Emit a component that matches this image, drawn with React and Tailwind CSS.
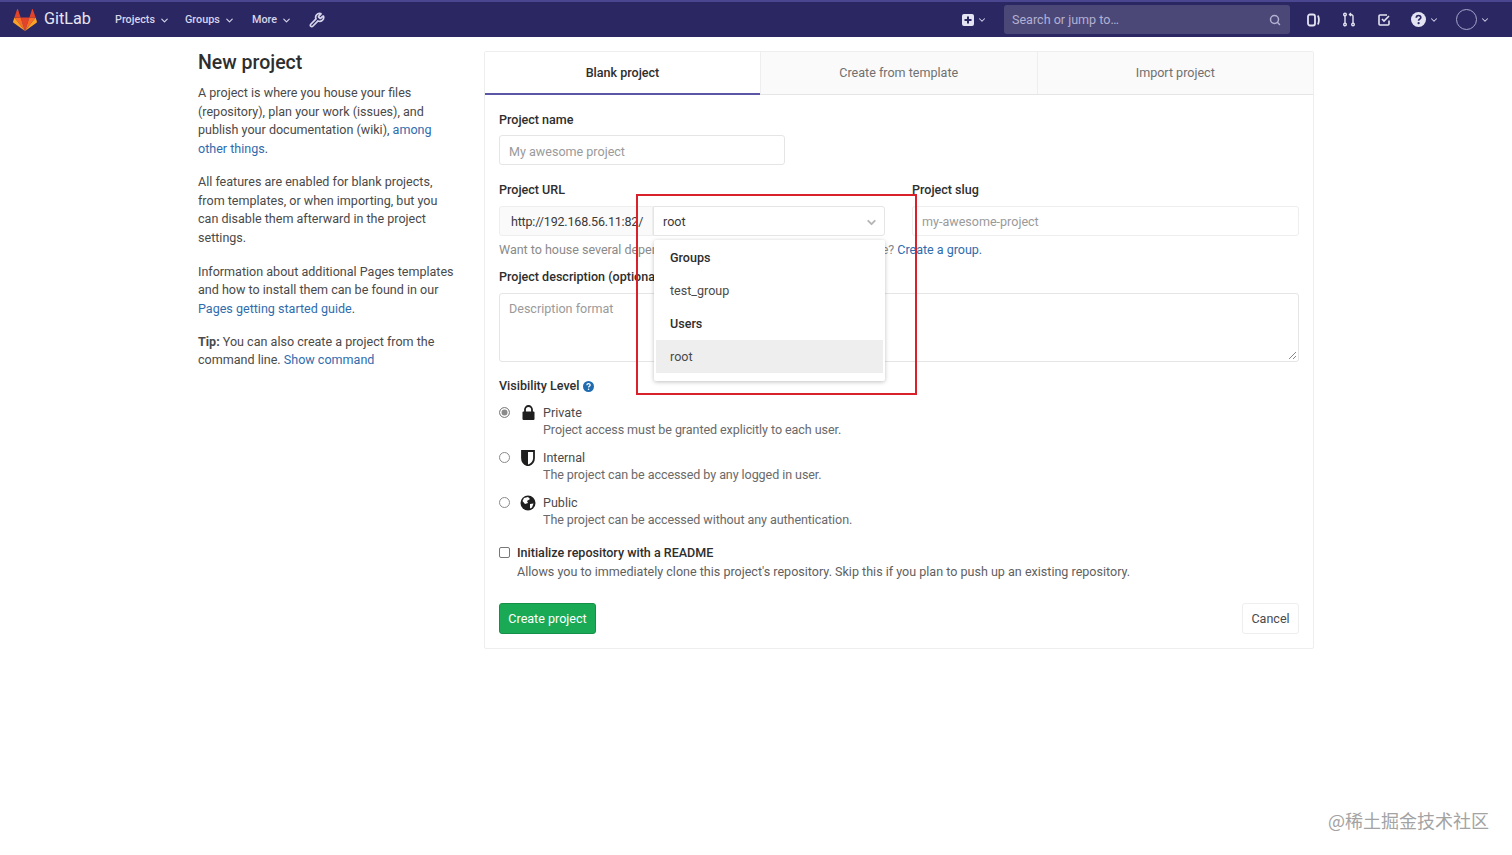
import { ChevronDown, Search, Wrench } from 'lucide-react';

function Tanuki() {
  return (
    <svg width="24" height="22" viewBox="0 0 24 22">
      <path d="M12 22 L7.6 8.4 H16.4 Z" fill="#e24329" />
      <path d="M12 22 L7.6 8.4 H1.4 Z" fill="#fc6d26" />
      <path d="M1.4 8.4 L0.1 12.5 C0 13 0.1 13.4 0.5 13.7 L12 22 Z" fill="#fca326" />
      <path d="M1.4 8.4 H7.6 L5 0.4 C4.8 0 4.3 0 4.1 0.4 Z" fill="#e24329" />
      <path d="M12 22 L16.4 8.4 H22.6 Z" fill="#fc6d26" />
      <path d="M22.6 8.4 L23.9 12.5 C24 13 23.9 13.4 23.5 13.7 L12 22 Z" fill="#fca326" />
      <path d="M22.6 8.4 H16.4 L19 0.4 C19.2 0 19.7 0 19.9 0.4 Z" fill="#e24329" />
    </svg>
  );
}

function NavLink({ label, className }) {
  return (
    <a className={`flex items-center gap-[4px] pt-[1px] text-[10.8px] font-medium text-[#d6d5ea] ${className}`}>
      {label}
      <ChevronDown size={11} strokeWidth={2.5} />
    </a>
  );
}

function Padlock() {
  return (
    <svg width="13" height="15" viewBox="0 0 13 15">
      <path d="M3 7V4.5a3.5 3.5 0 0 1 7 0V7" fill="none" stroke="#1f1f1f" strokeWidth="1.8" />
      <rect x="0.5" y="6.5" width="12" height="8.5" rx="1" fill="#1f1f1f" />
    </svg>
  );
}

function Shield() {
  return (
    <svg width="14" height="16" viewBox="0 0 14 16">
      <path d="M1 1 H13 V8 C13 12 10 14.5 7 15.5 C4 14.5 1 12 1 8 Z" fill="none" stroke="#1f1f1f" strokeWidth="1.8" />
      <path d="M1 1 H7 V15.5 C4 14.5 1 12 1 8 Z" fill="#1f1f1f" />
    </svg>
  );
}

function Globe() {
  return (
    <svg width="16" height="16" viewBox="0 0 16 16">
      <circle cx="8" cy="8" r="7.5" fill="#1f1f1f" />
      <path d="M4 3 L8 2 L10 4 L7 6 L8 8 L5 9 L2.5 6 Z" fill="#fff" />
      <path d="M10 9 L13.5 8.5 L12 12.5 L10 13.5 Z" fill="#fff" />
    </svg>
  );
}

function VisibilityOption({ icon, title, text, checked, className }) {
  return (
    <div className={`flex ${className}`}>
      <span className="w-[19px] shrink-0 pt-[3px]">
        <span className={`block w-[11px] h-[11px] rounded-full border ${checked ? 'border-[#8a8a8a] bg-[#8a8a8a] shadow-[inset_0_0_0_1.5px_#fff]' : 'border-[#8a8a8a] bg-white'}`} />
      </span>
      <span className="w-[20px] mr-[5px] shrink-0 flex justify-center pt-[1px] h-[17px]">{icon}</span>
      <div>
        <div className="leading-[17px] text-[#4a4a4a]">{title}</div>
        <div className="leading-[17px] tracking-[-0.08px] text-[#6a6a6a]">{text}</div>
      </div>
    </div>
  );
}

export default function App() {
  return (
    <div className="relative min-h-[855px] bg-white text-[12.55px] text-[#4a4a4a] font-['Roboto',sans-serif]">
      <header className="h-[37px] bg-[#2b2763] border-t-2 border-[#4a4690] flex items-center pl-[13px] pr-[22px]">
        <Tanuki />
        <span className="ml-[7px] text-[16.2px] text-[#e6e5f2] w-[71px]">GitLab</span>
        <nav className="flex items-center">
          <NavLink label="Projects" className="w-[70px]" />
          <NavLink label="Groups" className="w-[67px]" />
          <NavLink label="More" className="w-[57px]" />
          <Wrench size={16} strokeWidth={2.6} className="text-[#d6d5ea]" />
        </nav>
        <div className="ml-auto flex items-center">
          <svg width="12" height="12" viewBox="0 0 12 12"><rect width="12" height="12" rx="2" fill="#e4e3f1" /><path d="M6 2.5v7M2.5 6h7" stroke="#2b2763" strokeWidth="2" /></svg>
          <ChevronDown size={10} strokeWidth={2.5} className="ml-[3px] text-[#d6d5ea]" />
          <div className="ml-[17px] w-[286px] h-[29px] rounded-[3px] bg-[#4b4878] flex items-center justify-between pl-2 pr-[9px] pt-[1px] text-[#b3b1d2]">
            <span>Search or jump to…</span>
            <Search size={12} strokeWidth={3} />
          </div>
          <svg className="ml-[17px]" width="13" height="14" viewBox="0 0 13 14" fill="none" stroke="#e4e3f1" strokeWidth="1.8"><rect x="1" y="1.5" width="7" height="11" rx="2" /><path d="M11 2.5c1 2.5 1 6.5 0 9" /></svg>
          <svg className="ml-[23px]" width="12" height="15" viewBox="0 0 12 15" fill="none" stroke="#e4e3f1" strokeWidth="1.4"><circle cx="2" cy="2.5" r="1.3" /><circle cx="2" cy="12.5" r="1.3" /><circle cx="10" cy="12.5" r="1.3" /><path d="M2 4v7M10 11V4.5C10 3 9 2.5 7 2.5M8 1 6.5 2.5 8 4" /></svg>
          <svg className="ml-[23px]" width="13" height="13" viewBox="0 0 13 13" fill="none" stroke="#e4e3f1" strokeWidth="1.6"><path d="M11 7.5V11a1 1 0 0 1-1 1H2a1 1 0 0 1-1-1V3a1 1 0 0 1 1-1h7" /><path d="M4 6l2 2 5-5" /></svg>
          <svg className="ml-[20px]" width="15" height="15" viewBox="0 0 15 15"><circle cx="7.5" cy="7.5" r="7.5" fill="#e4e3f1" /><path d="M5.3 5.8c0-3 4.5-3 4.5-.3 0 1.6-2.2 1.7-2.2 3.2" fill="none" stroke="#2b2763" strokeWidth="1.7" /><circle cx="7.6" cy="11.2" r="1.1" fill="#2b2763" /></svg>
          <ChevronDown size={10} strokeWidth={2.5} className="ml-[3px] text-[#d6d5ea]" />
          <span className="ml-[17px] w-[21px] h-[21px] rounded-full border border-[#a7a5cc]" />
          <ChevronDown size={10} strokeWidth={2.5} className="ml-[3px] text-[#d6d5ea]" />
        </div>
      </header>

      <main className="flex pl-[198px] pt-[14px]">
        <aside className="w-[286px] shrink-0 pr-[30px] leading-[18.7px]">
          <h1 className="text-[19.5px] leading-[24px] mb-[9px] text-[#2e2e2e] font-medium">New project</h1>
          <p className="mb-[14px]">A project is where you house your files (repository), plan your work (issues), and publish your documentation (wiki), <a className="text-[#2f6cae]">among other things</a>.</p>
          <p className="mb-[15px]">All features are enabled for blank projects, from templates, or when importing, but you can disable them afterward in the project settings.</p>
          <p className="mb-[14px]">Information about additional Pages templates and how to install them can be found in our <a className="text-[#2f6cae]">Pages getting started guide</a>.</p>
          <p><b className="font-bold">Tip:</b> You can also create a project from the command line. <a className="text-[#2f6cae]">Show command</a></p>
        </aside>

        <section className="w-[830px] h-[598px] border border-[#eeeeee] rounded-[2px]">
          <div className="flex h-[43px] border-b border-[#e5e5e5] text-center leading-[41px]">
            <div className="w-[275px] bg-white border-b-2 border-[#5b57a6] h-[43px] font-medium text-[#2e2e2e]">Blank project</div>
            <div className="flex-1 bg-[#fafafa] border-l border-[#eeeeee] text-[#707070]">Create from template</div>
            <div className="flex-1 bg-[#fafafa] border-l border-[#eeeeee] text-[#707070]">Import project</div>
          </div>

          <div className="px-[14px]">
            <label className="block mt-[16px] leading-[18px] font-medium text-[#2e2e2e]">Project name</label>
            <div className="mt-[6px] w-[286px] h-[30px] border border-[#e5e5e5] rounded-[3px] px-[9px] leading-[31px] text-[#9a9a9a]">My awesome project</div>

            <div className="flex mt-[16px] leading-[18px] font-medium text-[#2e2e2e]">
              <label className="w-[413px]">Project URL</label>
              <label>Project slug</label>
            </div>
            <div className="flex mt-[7px] h-[30px]">
              <div className="w-[154px] bg-[#fafafa] border border-[#eeeeee] rounded-l-[3px] pl-[11px] leading-[29px] tracking-[-0.2px] text-[#3a3a3a] whitespace-nowrap overflow-hidden">http://192.168.56.11:82/</div>
              <div className="w-[232px] border border-[#e5e5e5] rounded-r-[3px] pl-[9px] pr-[6px] leading-[29px] flex justify-between items-center text-[#3a3a3a]">
                root
                <ChevronDown size={13} strokeWidth={3.5} className="text-[#b5b5b5] mt-[2px]" />
              </div>
              <div className="ml-[27px] flex-1 border border-[#eeeeee] rounded-[3px] px-[9px] leading-[29px] text-[#9a9a9a]">my-awesome-project</div>
            </div>
            <p className="mt-[5px] leading-[18px] text-[#8a8a8a] whitespace-nowrap tracking-[-0.03px]">Want to house several dependent projects under the same namespace? <a className="text-[#2f6cae]">Create a group.</a></p>

            <label className="block mt-[9px] leading-[18px] font-medium text-[#2e2e2e]">Project description (optional)</label>
            <div className="relative mt-[7px] h-[69px] border border-[#e5e5e5] rounded-[3px] px-[9px] pt-[5px] leading-[20px] text-[#9a9a9a]">
              Description format
              <svg className="absolute right-[1px] bottom-[1px]" width="9" height="9" viewBox="0 0 9 9" stroke="#888" fill="none"><path d="M1 8 8 1M5 8 8 5" /></svg>
            </div>

            <div className="mt-[15px] flex items-center gap-[3px] leading-[18px] font-medium text-[#2e2e2e]">
              Visibility Level
              <svg width="11" height="11" viewBox="0 0 15 15"><circle cx="7.5" cy="7.5" r="7.5" fill="#1f6bb0" /><path d="M5.3 5.8c0-3 4.5-3 4.5-.3 0 1.6-2.2 1.7-2.2 3.2" fill="none" stroke="#fff" strokeWidth="1.7" /><circle cx="7.6" cy="11.2" r="1.1" fill="#fff" /></svg>
            </div>
            <VisibilityOption className="mt-[9px]" checked icon={<Padlock />} title="Private" text="Project access must be granted explicitly to each user." />
            <VisibilityOption className="mt-[11px]" icon={<Shield />} title="Internal" text="The project can be accessed by any logged in user." />
            <VisibilityOption className="mt-[11px]" icon={<Globe />} title="Public" text="The project can be accessed without any authentication." />

            <div className="flex mt-[15px]">
              <span className="w-[18px] shrink-0 pt-[4px]"><span className="block w-[11px] h-[11px] border border-[#777] rounded-[2px] bg-white" /></span>
              <div>
                <div className="leading-[19px] font-medium text-[#2e2e2e]">Initialize repository with a README</div>
                <div className="leading-[19px] text-[#5f5f5f]">Allows you to immediately clone this project's repository. Skip this if you plan to push up an existing repository.</div>
              </div>
            </div>

            <div className="flex justify-between mt-[22px]">
              <button className="h-[31px] w-[97px] pt-[2px] rounded-[3px] bg-[#1aaa55] border border-[#168f48] text-white">Create project</button>
              <button className="h-[31px] w-[57px] pt-[2px] rounded-[3px] bg-white border border-[#eeeeee] text-[#4a4a4a]">Cancel</button>
            </div>
          </div>
        </section>
      </main>

      {/* open namespace dropdown */}
      <div className="absolute left-[654px] top-[240px] w-[231px] h-[141px] bg-white rounded-[2px] shadow-[0_1px_4px_rgba(0,0,0,0.25)] px-[2px] pt-[1px]">
        <div className="h-[33px] pl-[14px] leading-[33px] font-medium text-[#2e2e2e]">Groups</div>
        <div className="h-[33px] pl-[14px] leading-[33px]">test_group</div>
        <div className="h-[33px] pl-[14px] leading-[33px] font-medium text-[#2e2e2e]">Users</div>
        <div className="h-[33px] pl-[14px] leading-[33px] bg-[#eeeeee]">root</div>
      </div>

      {/* red annotation box */}
      <div className="absolute left-[636px] top-[194px] w-[281px] h-[201px] border-2 border-[#d9212c] pointer-events-none" />

      <div className="absolute right-[23px] top-[808px] text-[18px] leading-[24px] text-[#a3a3a3] font-['Noto_Sans_CJK_SC',sans-serif]">@稀土掘金技术社区</div>
    </div>
  );
}
